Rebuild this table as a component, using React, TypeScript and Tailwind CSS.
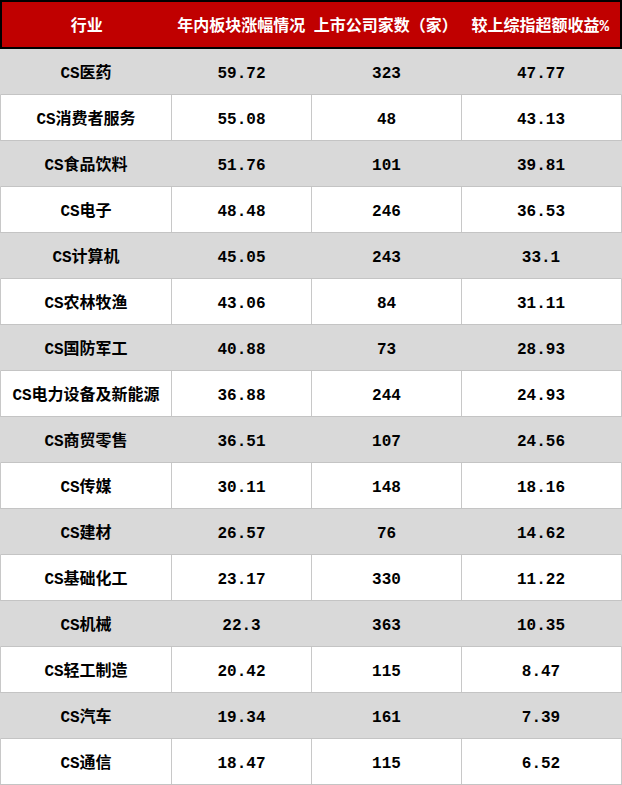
const rows: [string, string, string, string][] = [
  ['CS医药', '59.72', '323', '47.77'],
  ['CS消费者服务', '55.08', '48', '43.13'],
  ['CS食品饮料', '51.76', '101', '39.81'],
  ['CS电子', '48.48', '246', '36.53'],
  ['CS计算机', '45.05', '243', '33.1'],
  ['CS农林牧渔', '43.06', '84', '31.11'],
  ['CS国防军工', '40.88', '73', '28.93'],
  ['CS电力设备及新能源', '36.88', '244', '24.93'],
  ['CS商贸零售', '36.51', '107', '24.56'],
  ['CS传媒', '30.11', '148', '18.16'],
  ['CS建材', '26.57', '76', '14.62'],
  ['CS基础化工', '23.17', '330', '11.22'],
  ['CS机械', '22.3', '363', '10.35'],
  ['CS轻工制造', '20.42', '115', '8.47'],
  ['CS汽车', '19.34', '161', '7.39'],
  ['CS通信', '18.47', '115', '6.52'],
]

const headers = ['行业', '年内板块涨幅情况', '上市公司家数（家）', '较上综指超额收益%']
const widths = ['w-[172px]', 'w-[140px]', 'w-[150px]', 'w-[160px]']

export default function App() {
  return (
    <div className="w-[622px] h-[785px] bg-white font-['Liberation_Mono','Noto_Sans_CJK_SC',monospace] text-[16px] font-bold">
      {/* header */}
      <div className="flex h-[49px] border-2 border-black bg-[#c00000] pt-[4px] text-white">
        {headers.map((h, i) => (
          <div key={h} className={`${i === 0 ? 'w-[170px]' : widths[i]} ${i === 3 ? 'w-[156px]' : ''} flex items-center justify-center whitespace-nowrap`}>
            {h}
          </div>
        ))}
      </div>

      {rows.map((r, ri) => {
        const gray = ri % 2 === 0
        return (
          <div
            key={r[0]}
            className={`flex h-[46px] border-b border-[#c4c4c4] ${gray ? 'bg-[#d9d9d9] border-x border-x-[#d9d9d9]' : 'bg-white border-x border-x-[#c8c8c8]'}`}
          >
            {r.map((c, ci) => (
              <div
                key={ci}
                className={`${ci === 0 ? 'w-[171px]' : ci === 3 ? 'w-[158px]' : widths[ci]} flex items-center justify-center whitespace-nowrap pt-[4px] text-black ${ci < 3 ? (gray ? 'border-r border-[#d9d9d9]' : 'border-r border-[#c8c8c8]') : ''}`}
              >
                {c}
              </div>
            ))}
          </div>
        )
      })}
    </div>
  )
}
